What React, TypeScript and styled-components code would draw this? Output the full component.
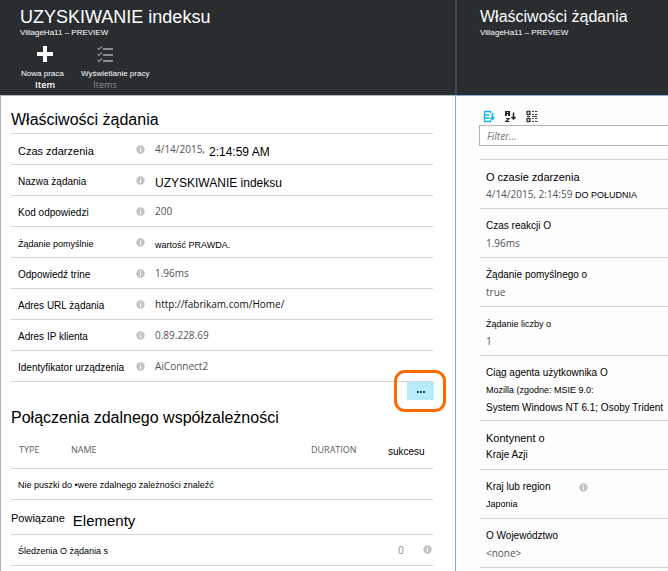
import React from "react";
import styled, { createGlobalStyle } from "styled-components";

const sans = '"Liberation Sans", Arial, sans-serif';
const human = '"Open Sans", "Noto Sans", sans-serif';

const GlobalStyle = createGlobalStyle`
  *, *::before, *::after { box-sizing: border-box; }
  body { margin: 0; background: #fff; color: #000; font-family: ${sans}; }
  h1, h2, dl, dd, p { margin: 0; font-weight: 400; }
  button { border: 0; padding: 0; background: none; font: inherit; color: inherit; cursor: pointer; }
`;

const Page = styled.div`
  display: grid;
  grid-template-columns: minmax(0, 455fr) minmax(0, 213fr);
  min-height: 100vh;
`;

const Blade = styled.section`
  display: flex;
  flex-direction: column;
`;

const BladeHeader = styled.header<{ $divided?: boolean }>`
  height: 95px;
  padding: ${(p) => (p.$divided ? "0 0 0 23px" : "0 0 0 20px")};
  background: #292d30;
  border-left: ${(p) => (p.$divided ? "2px solid #44484b" : "0")};
  color: #fff;
`;

const BladeTitle = styled.h1<{ $size: number }>`
  padding-top: 6px;
  font-size: ${(p) => p.$size}px;
  line-height: 22px;
  white-space: nowrap;
`;

const BladeSubtitle = styled.p`
  font-size: 8px;
  line-height: 10px;
`;

const Commands = styled.div`
  display: flex;
  gap: 10px;
  padding-top: 6px;
`;

const Command = styled.button`
  display: flex;
  flex-direction: column;
  align-items: center;
  width: 50px;
  color: #fff;
  &:disabled { color: #8b8e91; cursor: default; }
  svg { display: block; margin: 2px 0 6px; }
`;

const CommandLabel = styled.span`
  align-self: flex-start;
  padding-left: 1px;
  color: #fff;
  font-size: 8px;
  line-height: 11px;
  white-space: nowrap;
`;

const CommandCaption = styled.span<{ $strong?: boolean }>`
  font-family: ${human};
  font-weight: ${(p) => (p.$strong ? 600 : 400)};
  font-size: 9px;
  line-height: 12px;
`;

const LeftBody = styled.main`
  flex: 1;
  padding: 14px 22px 0 10px;
  border-top: 1px solid #aeb6c4;
  border-left: 1px solid #aeb0b8;
`;

const RightBody = styled.main`
  flex: 1;
  padding: 14px 0 0 23px;
  background: #fdfdfd;
  border-top: 1px solid #8aabdc;
  border-left: 1px solid #8aabdc;
`;

const SectionTitle = styled.h2<{ $size: number }>`
  font-size: ${(p) => p.$size}px;
  line-height: 20px;
`;

const Facts = styled.dl`
  margin-top: 3px;
  border-top: 1px solid #d9d9d9;
`;

const FactRow = styled.div`
  display: grid;
  grid-template-columns: 125px 19px 1fr;
  align-items: center;
  height: 31px;
  border-bottom: 1px solid #d4d4d4;
  svg { display: block; }
`;

const FactLabel = styled.dt<{ $size: number }>`
  padding: 4px 0 0 7px;
  font-size: ${(p) => p.$size}px;
  line-height: 14px;
  white-space: nowrap;
`;

const FactValue = styled.dd`
  display: flex;
  align-items: center;
  gap: 4px;
  line-height: 14px;
  white-space: nowrap;
`;

const Plain = styled.span<{ $size: number }>`
  padding-top: 6px;
  font-size: ${(p) => p.$size}px;
`;

const Soft = styled.span<{ $dark?: boolean }>`
  color: ${(p) => (p.$dark ? "#111" : "#50545a")};
  font-family: ${human};
  font-size: 10px;
`;

const MoreBar = styled.div`
  display: flex;
  justify-content: flex-end;
  margin: 0 -1px 8px 0;
`;

const MoreSlot = styled.div`
  position: relative;
  width: 27px;
  height: 18px;
`;

const MoreButton = styled.button`
  display: grid;
  place-items: center;
  width: 100%;
  height: 100%;
  background: #b9ecfa;
  color: #33444a;
`;

const Callout = styled.span`
  position: absolute;
  inset: -12px -12px -12px -13px;
  border: 3px solid #ff6a00;
  border-radius: 11px;
  pointer-events: none;
`;

const Dependencies = styled.table`
  width: 100%;
  border-collapse: collapse;
  table-layout: fixed;
  margin-top: 8px;
  text-align: left;
  th, td { padding: 0; border-bottom: 1px solid #d4d4d4; white-space: nowrap; }
  th { height: 32px; }
  td { height: 31px; padding: 3px 0 0 7px; font-size: 9px; }
`;

const Column = styled.th<{ $width?: number; $indent?: number; $plain?: boolean }>`
  width: ${(p) => (p.$width ? `${p.$width}px` : "auto")};
  && { padding: ${(p) => (p.$plain ? "0 0 1px" : "0 0 5px")} ${(p) => p.$indent ?? 0}px; }
  color: ${(p) => (p.$plain ? "#000" : "#5a5e63")};
  font-family: ${(p) => (p.$plain ? sans : human)};
  font-size: ${(p) => (p.$plain ? 10 : 9)}px;
  font-weight: 400;
`;

const RelatedTitle = styled.h2`
  display: flex;
  align-items: flex-start;
  gap: 8px;
  height: 35px;
  padding-top: 10px;
  border-bottom: 1px solid #d4d4d4;
  font-size: 11px;
  line-height: 16px;
`;

const RelatedName = styled.span`
  padding-top: 2px;
  font-size: 15px;
  line-height: 18px;
`;

const RelatedRow = styled.div`
  display: grid;
  grid-template-columns: 1fr 25px 10px;
  align-items: center;
  height: 31px;
  padding-left: 7px;
  border-bottom: 1px solid #d4d4d4;
  color: #000;
  font-size: 9px;
`;

const RelatedLabel = styled.span`
  padding-top: 3px;
`;

const RelatedCount = styled.span`
  color: #8d9095;
  font-family: ${human};
  font-size: 10px;
`;

const Tools = styled.div`
  display: flex;
  gap: 9px;
  padding-left: 4px;
  svg { display: block; }
`;

const Filter = styled.input`
  display: block;
  width: 100%;
  height: 21px;
  margin-top: 2px;
  padding: 0 7px;
  border: 1px solid #b4b4b4;
  border-right: 0;
  border-radius: 0;
  background: #fff;
  font: italic 10px ${human};
  &::placeholder { color: #777; opacity: 1; }
`;

const Details = styled.dl`
  margin-top: 13px;
  margin-left: 1px;
  border-top: 1px solid #d4d4d4;
`;

const Detail = styled.div`
  min-height: 49px;
  padding: 9px 0 3px 6px;
  border-bottom: 1px solid #d4d4d4;
  white-space: nowrap;
`;

const DetailLabel = styled.dt<{ $size: number }>`
  display: flex;
  align-items: center;
  gap: 29px;
  font-size: ${(p) => p.$size}px;
  line-height: 16px;
`;

const DetailValue = styled.dd<{ $size?: number }>`
  font-size: ${(p) => p.$size ?? 10}px;
  line-height: 18px;
`;

const Info = () => (
  <svg width="9" height="9" viewBox="0 0 9 9" aria-hidden="true">
    <circle cx="4.5" cy="4.5" r="4.2" fill="#c3c3c3" />
    <path d="M4.5 2v1.2M4.5 4v3" stroke="#fff" strokeWidth="1" />
  </svg>
);

const facts: { label: string; size: number; value: React.ReactNode }[] = [
  { label: "Czas zdarzenia", size: 11, value: <><Soft>4/14/2015,</Soft><Plain $size={12}>2:14:59 AM</Plain></> },
  { label: "Nazwa żądania", size: 10, value: <Plain $size={12}>UZYSKIWANIE indeksu</Plain> },
  { label: "Kod odpowiedzi", size: 10, value: <Soft>200</Soft> },
  { label: "Żądanie pomyślnie", size: 9, value: <Plain $size={9}>wartość PRAWDA.</Plain> },
  { label: "Odpowiedź trine", size: 10, value: <Soft>1.96ms</Soft> },
  { label: "Adres URL żądania", size: 10, value: <Soft $dark>http://fabrikam.com/Home/</Soft> },
  { label: "Adres IP klienta", size: 10, value: <Soft>0.89.228.69</Soft> },
  { label: "Identyfikator urządzenia", size: 10, value: <Soft>AiConnect2</Soft> },
];

const details: { label: string; size: number; info?: boolean; value: React.ReactNode }[] = [
  { label: "O czasie zdarzenia", size: 11, value: <DetailValue $size={9}><Soft>4/14/2015, 2:14:59</Soft> DO POŁUDNIA</DetailValue> },
  { label: "Czas reakcji O", size: 10, value: <DetailValue><Soft>1.96ms</Soft></DetailValue> },
  { label: "Żądanie pomyślnego o", size: 10, value: <DetailValue><Soft>true</Soft></DetailValue> },
  { label: "Żądanie liczby o", size: 9, value: <DetailValue><Soft>1</Soft></DetailValue> },
  {
    label: "Ciąg agenta użytkownika O",
    size: 10,
    value: <><DetailValue $size={9}>Mozilla (zgodne: MSIE 9.0:</DetailValue><DetailValue>System Windows NT 6.1; Osoby Trident</DetailValue></>,
  },
  { label: "Kontynent o", size: 11, value: <DetailValue>Kraje Azji</DetailValue> },
  { label: "Kraj lub region", size: 10, info: true, value: <DetailValue $size={9}>Japonia</DetailValue> },
  { label: "O Województwo", size: 10, value: <DetailValue><Soft>&lt;none&gt;</Soft></DetailValue> },
];

export default function App() {
  return (
    <>
      <GlobalStyle />
      <Page>
        <Blade>
          <BladeHeader>
            <BladeTitle $size={18}>UZYSKIWANIE indeksu</BladeTitle>
            <BladeSubtitle>VillageHa11 – PREVIEW</BladeSubtitle>
            <Commands>
              <Command>
                <svg width="16" height="16" viewBox="0 0 16 16" aria-hidden="true">
                  <path d="M8 0v16M0 8h16" stroke="#fff" strokeWidth="4" />
                </svg>
                <CommandLabel>Nowa praca</CommandLabel>
                <CommandCaption $strong>Item</CommandCaption>
              </Command>
              <Command disabled>
                <svg width="16" height="16" viewBox="0 0 16 16" fill="none" stroke="#8b8e91" aria-hidden="true">
                  <path d="M6 3h10M6 9h10M6 15h10" strokeWidth="2" />
                  <path d="M.5 2l1.5 1.5L5 .5M.5 8L2 9.5l3-3M.5 14L2 15.5l3-3" strokeWidth="1.2" />
                </svg>
                <CommandLabel>Wyświetlanie pracy</CommandLabel>
                <CommandCaption>Items</CommandCaption>
              </Command>
            </Commands>
          </BladeHeader>
          <LeftBody>
            <SectionTitle $size={16}>Właściwości żądania</SectionTitle>
            <Facts>
              {facts.map((f) => (
                <FactRow key={f.label}>
                  <FactLabel $size={f.size}>{f.label}</FactLabel>
                  <Info />
                  <FactValue>{f.value}</FactValue>
                </FactRow>
              ))}
            </Facts>
            <MoreBar>
              <MoreSlot>
                <MoreButton aria-label="Więcej">
                  <svg width="8" height="3" viewBox="0 0 8 3" fill="currentColor" aria-hidden="true">
                    <path d="M0 1h2v2H0zM3 1h2v2H3zM6 1h2v2H6z" />
                  </svg>
                </MoreButton>
                <Callout />
              </MoreSlot>
            </MoreBar>
            <SectionTitle $size={16}>Połączenia zdalnego współzależności</SectionTitle>
            <Dependencies>
              <thead>
                <tr>
                  <Column $width={60} $indent={8}>TYPE</Column>
                  <Column>NAME</Column>
                  <Column $width={77}>DURATION</Column>
                  <Column $width={45} $plain>sukcesu</Column>
                </tr>
              </thead>
              <tbody>
                <tr>
                  <td colSpan={4}>Nie puszki do •were zdalnego zależności znaleźć</td>
                </tr>
              </tbody>
            </Dependencies>
            <RelatedTitle>
              Powiązane <RelatedName>Elementy</RelatedName>
            </RelatedTitle>
            <RelatedRow>
              <RelatedLabel>Śledzenia O żądania s</RelatedLabel>
              <RelatedCount>0</RelatedCount>
              <Info />
            </RelatedRow>
          </LeftBody>
        </Blade>
        <Blade>
          <BladeHeader $divided>
            <BladeTitle $size={16}>Właściwości żądania</BladeTitle>
            <BladeSubtitle>VillageHa11 – PREVIEW</BladeSubtitle>
          </BladeHeader>
          <RightBody>
            <Tools>
              <button aria-label="Grupuj">
                <svg width="12" height="13" viewBox="0 0 12 13" fill="none" stroke="#12b4ee" aria-hidden="true">
                  <path d="M7.5 3.5V1.5h-6v10h6v-2M1.5 5h5M1.5 8h5" strokeWidth="1.3" />
                  <path d="M9.5 3v6M7.5 7.5l2 2 2-2" strokeWidth="1.5" />
                </svg>
              </button>
              <button aria-label="Sortuj">
                <svg width="13" height="13" viewBox="0 0 13 13" aria-hidden="true">
                  <path d="M1 1h5v5H1z" fill="#22272b" />
                  <path d="M3 2h1v1H3zM3 4h1v2H3z" fill="#fff" />
                  <g fill="none" stroke="#22272b">
                    <path d="M2 8.5h3L2 11.5h3.5" strokeWidth="1.2" />
                    <path d="M9.5 2.5v6M7.5 7l2 2 2-2" strokeWidth="1.5" />
                  </g>
                </svg>
              </button>
              <button aria-label="Kategorie">
                <svg width="12" height="13" viewBox="0 0 12 13" fill="none" stroke="#3a3f43" aria-hidden="true">
                  <path d="M1 1.5h3v3H1zM1 8.5h3v3H1z" strokeWidth="1.3" />
                  <path d="M6 1.5h2M9 1.5h2.5M6 4.5h2M9 4.5h2.5M6 8.5h2M9 8.5h2.5M6 11.5h2M9 11.5h2.5M1 6.5h3M6 6.5h5" strokeWidth="1.2" />
                </svg>
              </button>
            </Tools>
            <Filter placeholder="Filter..." aria-label="Filter" />
            <Details>
              {details.map((d) => (
                <Detail key={d.label}>
                  <DetailLabel $size={d.size}>
                    {d.label}
                    {d.info && <Info />}
                  </DetailLabel>
                  {d.value}
                </Detail>
              ))}
            </Details>
          </RightBody>
        </Blade>
      </Page>
    </>
  );
}
